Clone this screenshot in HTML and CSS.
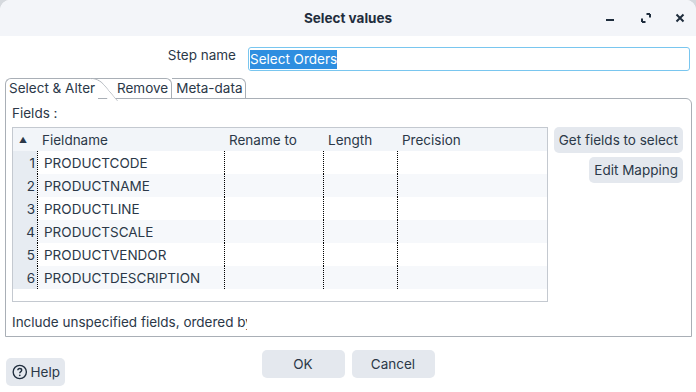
FILE: index.html
```html
<!DOCTYPE html>
<html lang="en">
<head>
  <meta charset="UTF-8">
  <title>Select values</title>
  <link rel="stylesheet" href="styles.css">
</head>
<body>
<div class="window">

  <div class="titlebar">
    <div class="title">Select values</div>
    <div class="win-buttons">
      <svg width="12" height="12" viewBox="0 0 12 12"><rect x="2" y="7" width="8" height="2" fill="#1f2d3d"/></svg>
      <svg width="12" height="12" viewBox="0 0 12 12"><path d="M2 10V6.5M2 10H5.5M10 2V5.5M10 2H6.5" stroke="#1f2d3d" stroke-width="2" fill="none"/></svg>
      <svg width="12" height="12" viewBox="0 0 12 12"><path d="M2.5 2.5L9.5 9.5M9.5 2.5L2.5 9.5" stroke="#1f2d3d" stroke-width="2"/></svg>
    </div>
  </div>

  <div class="stepname">
    <label>Step name</label>
    <div class="input"><span class="sel">Select Orders</span></div>
  </div>

  <div class="tabs">
    <div class="tab active">Select &amp; Alter</div>
    <div class="tab remove">Remove</div>
    <div class="tab">Meta-data</div>
  </div>

  <div class="pane">
    <div class="fields-label">Fields :</div>
    <div class="fields-area">
      <div class="grid">
        <div class="row head">
          <div class="c num"><span class="arrow">▲</span></div>
          <div class="c name">Fieldname</div>
          <div class="c rename">Rename to</div>
          <div class="c len">Length</div>
          <div class="c prec">Precision</div>
        </div>
        <div class="row"><div class="c num">1</div><div class="c name">PRODUCTCODE</div><div class="c rename"></div><div class="c len"></div><div class="c prec"></div></div>
        <div class="row"><div class="c num">2</div><div class="c name">PRODUCTNAME</div><div class="c rename"></div><div class="c len"></div><div class="c prec"></div></div>
        <div class="row"><div class="c num">3</div><div class="c name">PRODUCTLINE</div><div class="c rename"></div><div class="c len"></div><div class="c prec"></div></div>
        <div class="row"><div class="c num">4</div><div class="c name">PRODUCTSCALE</div><div class="c rename"></div><div class="c len"></div><div class="c prec"></div></div>
        <div class="row"><div class="c num">5</div><div class="c name">PRODUCTVENDOR</div><div class="c rename"></div><div class="c len"></div><div class="c prec"></div></div>
        <div class="row"><div class="c num">6</div><div class="c name">PRODUCTDESCRIPTION</div><div class="c rename"></div><div class="c len"></div><div class="c prec"></div></div>
      </div>
      <div class="side-buttons">
        <button>Get fields to select</button>
        <button>Edit Mapping</button>
      </div>
    </div>
    <div class="include">Include unspecified fields, ordered by</div>
  </div>

  <div class="footer">
    <button class="help">
      <svg width="16" height="16" viewBox="0 0 16 16"><circle cx="8" cy="8" r="6.8" stroke="#1f2d3d" stroke-width="1.4" fill="none"/><path d="M6 6.3C6 5.1 6.9 4.4 8 4.4S10 5.1 10 6.2C10 7.6 8 7.6 8 9.2" stroke="#1f2d3d" stroke-width="1.4" fill="none"/><circle cx="8" cy="11.4" r="0.9" fill="#1f2d3d"/></svg>
      Help
    </button>
    <div class="actions">
      <button>OK</button>
      <button>Cancel</button>
    </div>
    <div></div>
  </div>

</div>
</body>
</html>
```

FILE: styles.css
```css
/* Grundlayout */
* { box-sizing: border-box; }
body {
  margin: 0;
  font-family: Inter, "Noto Sans", sans-serif;
  font-size: 13.5px;
  color: #2b3848;
  background: #d5d9de;
}
.window {
  width: 696px;
  height: 392px;
  background: #fff;
  border-radius: 10px 10px 0 0;
  overflow: hidden;
  display: flex;
  flex-direction: column;
}
/* Titelleiste */
.titlebar {
  height: 36px;
  flex: none;
  background: #f3f5f9;
  display: grid;
  grid-template-columns: 1fr auto 1fr;
  align-items: center;
}
.title {
  grid-column: 2;
  font-weight: bold;
  color: #1f2d3d;
}
.win-buttons {
  justify-self: end;
  display: flex;
  gap: 22px;
  padding-right: 10px;
}
.win-buttons svg:nth-child(2) { margin-left: 2px; }
/* Schrittname */
.stepname {
  display: flex;
  align-items: center;
  margin-top: 11px;
  height: 24px;
}
.stepname label {
  width: 236px;
  text-align: right;
  margin-top: -8px;
}
.input {
  margin-left: 12px;
  width: 442px;
  height: 24px;
  border: 1px solid #79c6ef;
  border-radius: 3px;
  display: flex;
  align-items: center;
  padding-left: 1px;
}
.sel {
  background: #2e8ee0;
  color: #fff;
  padding: 1px 0 2px;
}
/* Tabs */
.tabs {
  display: flex;
  align-items: flex-end;
  margin: 7px 0 0 5px;
  height: 20px;
  position: relative;
  z-index: 1;
}
.tab {
  border: 1px solid #a9afb6;
  border-bottom: none;
  border-radius: 0 6px 0 0;
  padding: 0 3px 0 4px;
  height: 20px;
  line-height: 19px;
}
.tab.active {
  border-right: none;
  border-radius: 6px 0 0 0;
  padding: 0 0 0 3px;
  width: 93px;
  height: 21px;
  margin-bottom: -1px;
  background: #fff;
  position: relative;
}
.tab.active::after {
  content: '';
  position: absolute;
  top: -1px;
  left: calc(100% - 8px);
  width: 8px;
  height: 22px;
  border-top: 1px solid #a9afb6;
  border-right: 1px solid #a9afb6;
  border-radius: 0 7px 0 0;
  transform: skewX(40deg);
  transform-origin: top left;
  background: #fff;
  z-index: 1;
}
.tab.remove {
  border-left: none;
  border-radius: 0 6px 0 0;
  padding-left: 19px;
}
.tab.remove + .tab {
  border-left: none;
  border-radius: 0 6px 0 0;
  padding-left: 4px;
}
/* Reiterinhalt */
.pane {
  margin: 0 4px 0 5px;
  height: 239px;
  flex: none;
  border: 1px solid #a9afb6;
  border-radius: 0 6px 0 0;
  padding: 6px 6px 0 6px;
  display: flex;
  flex-direction: column;
}
.fields-label { line-height: 16px; }
.fields-area {
  display: flex;
  gap: 5px;
  margin-top: 6px;
}
.grid {
  width: 536px;
  height: 175px;
  border: 1px solid #c4c9d0;
}
.row {
  display: flex;
  height: 23px;
  align-items: stretch;
}
.row:nth-child(odd) { background: #f6f8fb; }
.row.head { background: #f2f5f9; }
.c {
  display: flex;
  align-items: center;
  padding-left: 6px;
  border-left: 1px dotted #000;
}
.head .c {
  border-left-color: transparent;
  padding-left: 4px;
}
.c.num {
  width: 24px;
  padding: 0 2px 0 0;
  justify-content: flex-end;
  border-left: none;
  background: #e7ecf2;
}
.head .c.num {
  background: #f2f5f9;
  justify-content: flex-start;
  padding-left: 6px;
}
.arrow { font-size: 8px; }
.c.name   { width: 187px; }
.c.rename { width: 99px; }
.c.len    { width: 74px; }
.c.prec   { flex: 1; }
/* Buttons */
button {
  font: inherit;
  color: #2b3848;
  background: #e4e8ee;
  border: none;
  border-radius: 5px;
  padding: 0 5px;
  height: 26px;
}
.side-buttons {
  display: flex;
  flex-direction: column;
  align-items: flex-end;
  gap: 4px;
  width: 130px;
}
.include {
  margin-top: auto;
  padding-bottom: 6px;
  width: 235px;
  white-space: nowrap;
  overflow: hidden;
}
/* Fusszeile */
.footer {
  display: grid;
  grid-template-columns: 1fr auto 1fr;
  flex: 1;
  padding: 13px 0 6px 0;
}
.help {
  align-self: end;
  justify-self: start;
  margin-left: 6px;
  width: 59px;
  height: 28px;
  display: flex;
  align-items: center;
  gap: 3px;
  padding-left: 6px;
}
.actions {
  display: flex;
  gap: 7px;
  align-self: start;
}
.actions button {
  width: 83px;
  height: 28px;
}
```
